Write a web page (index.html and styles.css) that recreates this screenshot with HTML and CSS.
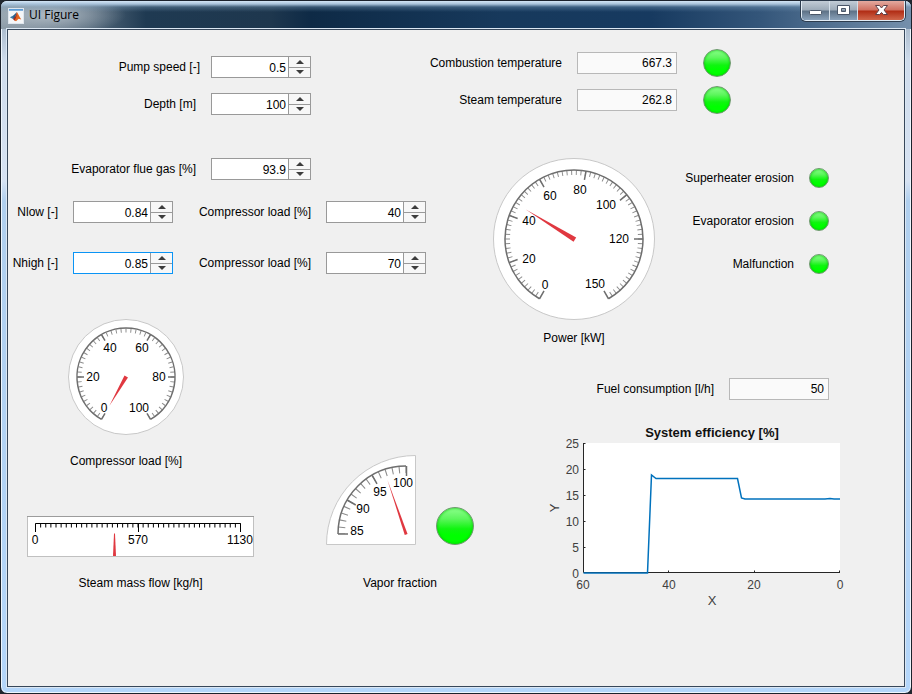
FILE: index.html
```html
<!DOCTYPE html>
<html lang="en">
<head>
<meta charset="utf-8">
<title>UI Figure</title>
<link rel="stylesheet" href="styles.css">
</head>
<body>
<div class="window">
  <header class="titlebar">
    <svg class="app-icon" width="16" height="16" viewBox="0 0 16 16" aria-hidden="true">
      <rect width="16" height="16" fill="#f4f6f8"/>
      <rect width="16" height="2" fill="#5b9bd5"/>
      <path d="M1 9.5 5 7.5 7 9 4.500 11.500Z" fill="#3a78a8"/>
      <path d="M5 7.500 9 3.500 7 10 4.500 11.500Z" fill="#2d5f86"/>
      <path d="M9 3.500 C8 8 6.500 10 4.500 11.500 L6.500 13.500 L9.500 10.500Z" fill="#a3291c"/>
      <path d="M9 3.500 C10.500 5 12 9.500 14 12 L11 11 L8 14 L6.500 13 C8 11 9 8 9 3.500Z" fill="#e3631e"/>
    </svg>
    <h1 class="title">UI Figure</h1>
    <div class="caption-buttons">
      <button class="cap cap-min" type="button" aria-label="Minimize"><svg width="13" height="13" viewBox="0 0 13 13"><rect x="0.500" y="6.500" width="12" height="4" rx="1" fill="#fff" stroke="#4a5668"/></svg></button>
      <button class="cap cap-max" type="button" aria-label="Maximize"><svg width="13" height="13" viewBox="0 0 13 13"><path fill-rule="evenodd" d="M0.500 1.500h12v9H0.500zM4.500 4.500v3h4v-3z" fill="#fff" stroke="#4a5668"/></svg></button>
      <button class="cap cap-close" type="button" aria-label="Close"><svg width="13" height="13" viewBox="0 0 13 13"><path d="M0.500 1.500H4.500L6.500 4 8.500 1.500h4L9 6l3.500 4.500h-4L6.500 8.500 4.500 10.500h-4L4 6z" fill="#fff" stroke="#5c4048"/></svg></button>
    </div>
  </header>

  <main class="client">
    <section class="top">
      <div class="inputs">
        <div class="field field-tight">
          <label for="pump">Pump speed [-]</label>
          <div class="spinner"><input id="pump" type="text" inputmode="decimal" value="0.5"><button class="up" type="button" aria-label="Increase"></button><button class="down" type="button" aria-label="Decrease"></button></div>
        </div>
        <div class="field">
          <label for="depth">Depth [m]</label>
          <div class="spinner"><input id="depth" type="text" inputmode="decimal" value="100"><button class="up" type="button" aria-label="Increase"></button><button class="down" type="button" aria-label="Decrease"></button></div>
        </div>
      </div>
      <div class="readouts">
        <div class="readout">
          <label for="combustion">Combustion temperature</label>
          <input class="value" id="combustion" type="text" value="667.3" readonly>
          <span class="lamp lamp-medium"></span>
        </div>
        <div class="readout">
          <label for="steam">Steam temperature</label>
          <input class="value" id="steam" type="text" value="262.8" readonly>
          <span class="lamp lamp-medium"></span>
        </div>
      </div>
    </section>

    <section class="lower">
      <div class="left">
        <div class="field">
          <label for="flue">Evaporator flue gas [%]</label>
          <div class="spinner"><input id="flue" type="text" inputmode="decimal" value="93.9"><button class="up" type="button" aria-label="Increase"></button><button class="down" type="button" aria-label="Decrease"></button></div>
        </div>
        <div class="limits">
          <label for="nlow">Nlow [-]</label>
          <div class="spinner"><input id="nlow" type="text" inputmode="decimal" value="0.84"><button class="up" type="button" aria-label="Increase"></button><button class="down" type="button" aria-label="Decrease"></button></div>
          <label for="loadlow">Compressor load [%]</label>
          <div class="spinner"><input id="loadlow" type="text" inputmode="decimal" value="40"><button class="up" type="button" aria-label="Increase"></button><button class="down" type="button" aria-label="Decrease"></button></div>
          <label for="nhigh">Nhigh [-]</label>
          <div class="spinner active"><input id="nhigh" type="text" inputmode="decimal" value="0.85"><button class="up" type="button" aria-label="Increase"></button><button class="down" type="button" aria-label="Decrease"></button></div>
          <label for="loadhigh">Compressor load [%]</label>
          <div class="spinner"><input id="loadhigh" type="text" inputmode="decimal" value="70"><button class="up" type="button" aria-label="Increase"></button><button class="down" type="button" aria-label="Decrease"></button></div>
        </div>

        <div class="meters">
          <div class="meter-column">
            <figure class="gauge compressor">
              <svg width="116" height="116" viewBox="0 0 116 116">
                <circle class="face" cx="58" cy="58" r="57.500"/>
                <path class="minor" d="M34.750 98.270A46.500 46.500 0 1 1 81.250 98.270" stroke-width="4" pathLength="50" stroke-dasharray="0.200 0.800" stroke-dashoffset="0.100"/>
                <path class="arc" d="M33.500 100.430A49 49 0 1 1 82.500 100.430"/>
                <g class="major">
                  <path d="M58 9v7" transform="rotate(-150 58 58)"/>
                  <path d="M58 9v7" transform="rotate(-90 58 58)"/>
                  <path d="M58 9v7" transform="rotate(-30 58 58)"/>
                  <path d="M58 9v7" transform="rotate(30 58 58)"/>
                  <path d="M58 9v7" transform="rotate(90 58 58)"/>
                  <path d="M58 9v7" transform="rotate(150 58 58)"/>
                </g>
                <g class="scale">
                  <text x="36" y="93">0</text><text x="25" y="62">20</text><text x="42" y="33">40</text>
                  <text x="74" y="33">60</text><text x="91" y="62">80</text><text x="71" y="93">100</text>
                </g>
                <path class="needle" d="M56 58.500h4L58 24.500z" transform="rotate(-150 58 58)"/>
              </svg>
              <figcaption>Compressor load [%]</figcaption>
            </figure>
            <figure class="gauge steam">
              <svg width="227" height="41" viewBox="0 0 227 41">
                <rect x="0.500" y="0.500" width="226" height="40" fill="#fff" stroke="#c0c0c0"/>
                <path d="M0 0.500h227" stroke="#9c9c9c"/>
                <path d="M8.500 9.500H214" stroke="#000" stroke-width="4" stroke-dasharray="1 4.125" stroke-dashoffset="0.500"/>
                <path d="M8.500 16V7.500H213.500V16M111.500 7.500V16" fill="none" stroke="#000"/>
                <g class="scale"><text x="8" y="28">0</text><text x="111" y="28">570</text><text x="213" y="28">1130</text></g>
                <path class="needle" d="M86 40h3L88 17.500h-1z"/>
              </svg>
              <figcaption>Steam mass flow [kg/h]</figcaption>
            </figure>
          </div>
          <figure class="gauge vapor">
            <div class="vapor-row">
              <svg width="90" height="90" viewBox="0 0 90 90">
                <path class="face" d="M0.500 89.500A89 89 0 0 1 89.500 0.500V89.500Z"/>
                <path class="minor" d="M15.500 79A64.500 64.500 0 0 1 80 14.500" stroke-width="7" pathLength="15" stroke-dasharray="0.160 0.840" stroke-dashoffset="0.080"/>
                <path class="arc" d="M12 79A68 68 0 0 1 80 11"/>
                <g class="major">
                  <path d="M80 11v10" transform="rotate(-90 80 79)"/>
                  <path d="M80 11v10" transform="rotate(-60 80 79)"/>
                  <path d="M80 11v10" transform="rotate(-30 80 79)"/>
                  <path d="M80.500 11v10"/>
                </g>
                <g class="scale"><text x="31" y="80">85</text><text x="37" y="58">90</text><text x="54" y="41">95</text><text x="77" y="32">100</text></g>
                <path class="needle" d="M78.500 79.500h3L80 22z" transform="rotate(-19 80 79)"/>
              </svg>
              <span class="lamp lamp-large"></span>
            </div>
            <figcaption>Vapor fraction</figcaption>
          </figure>
        </div>
      </div>

      <div class="right">
        <div class="power-row">
          <figure class="gauge power">
            <svg width="162" height="162" viewBox="0 0 162 162">
              <circle class="face" cx="81" cy="81" r="80.500"/>
              <path class="minor" d="M47.750 138.590A66.500 66.500 0 1 1 114.250 138.590" stroke-width="5" pathLength="75" stroke-dasharray="0.210 0.790" stroke-dashoffset="0.105"/>
              <path class="arc" d="M46.500 140.760A69 69 0 1 1 115.500 140.760"/>
              <g class="major">
                <path d="M81 12v9" transform="rotate(-150 81 81)"/>
                <path d="M81 12v9" transform="rotate(-110 81 81)"/>
                <path d="M81 12v9" transform="rotate(-70 81 81)"/>
                <path d="M81 12v9" transform="rotate(-30 81 81)"/>
                <path d="M81 12v9" transform="rotate(10 81 81)"/>
                <path d="M81 12v9" transform="rotate(50 81 81)"/>
                <path d="M81 12v9" transform="rotate(90 81 81)"/>
                <path d="M81 12v9" transform="rotate(150 81 81)"/>
              </g>
              <g class="scale">
                <text x="52" y="131">0</text><text x="36" y="105">20</text><text x="36" y="67">40</text><text x="57" y="42">60</text>
                <text x="87" y="36">80</text><text x="113" y="51">100</text><text x="126" y="85">120</text><text x="102" y="130">150</text>
              </g>
              <path class="needle" d="M78.500 82h5L81 24.500z" transform="rotate(-58.500 81 81)"/>
            </svg>
            <figcaption>Power [kW]</figcaption>
          </figure>
          <ul class="status">
            <li>Superheater erosion<span class="lamp"></span></li>
            <li>Evaporator erosion<span class="lamp"></span></li>
            <li>Malfunction<span class="lamp"></span></li>
          </ul>
        </div>
        <div class="fuel">
          <label for="fuel">Fuel consumption [l/h]</label>
          <input class="value" id="fuel" type="text" value="50" readonly>
        </div>
        <svg class="chart" width="310" height="186" viewBox="0 0 310 186" role="img" aria-label="System efficiency [%]">
          <rect x="39" y="19" width="256" height="130" fill="#fff"/>
          <path d="M38.500 19V148.500H295M38.500 19.500h2M38.500 45.500h2M38.500 71.500h2M38.500 97.500h2M38.500 123.500h2M123.500 148.500v-2M209.500 148.500v-2M294.500 148.500v-2" fill="none" stroke="#262626"/>
          <path d="M38.500 149H102.500L106.500 51L111 54.500H192.500L196.500 74L200 75H280L285 74.500L289 75H295" fill="none" stroke="#0072bd" stroke-width="1.500"/>
          <text class="chart-title" x="167" y="13">System efficiency [%]</text>
          <g class="y-ticks"><text x="34" y="24">25</text><text x="34" y="50">20</text><text x="34" y="76">15</text><text x="34" y="102">10</text><text x="34" y="128">5</text><text x="34" y="154">0</text></g>
          <g class="x-ticks"><text x="38" y="165">60</text><text x="124" y="165">40</text><text x="209" y="165">20</text><text x="295" y="165">0</text></g>
          <text class="axis-name" x="167" y="181">X</text>
          <text class="axis-name" transform="translate(14 84) rotate(-90)">Y</text>
        </svg>
      </div>
    </section>
  </main>
</div>
</body>
</html>
```
FILE: styles.css
```css
* { box-sizing: border-box; }

body {
  margin: 0;
  background: #20262e;
  font: 12px/16px "Liberation Sans", Arial, sans-serif;
  color: #000;
}

.window {
  display: flex;
  flex-direction: column;
  min-height: 100vh;
  padding: 0 6px 6px;
  border: 1px solid #1c222c;
  border-radius: 7px;
  background: linear-gradient(#8fa2b4 0, #cfdcec 60px, #d6e2f2 180px, #b0cfee 200px, #b4d6fa 100%);
  box-shadow: inset 0 0 0 1px #eef6fd;
}

.titlebar {
  display: flex;
  align-items: flex-start;
  height: 28px;
  margin: 0 -6px;
  padding: 6px 6px 0 7px;
  border-radius: 6px 6px 0 0;
  background:
    linear-gradient(#d4e6f6 0, #a8c2da 3px, rgba(130, 165, 195, 0.350) 6px, transparent 11px),
    radial-gradient(ellipse 75px 20px at 50px 14px, rgba(190, 200, 208, 0.800), transparent),
    linear-gradient(90deg, #8b9aa6 0, #566a7c 90px, #1f3a52 145px, #1e374e 270px, #0e2a46 310px, #17395c 500px, #173a60 650px, #34567a 760px, #7590ac 100%);
}

.app-icon { margin-top: 1px; border: 1px solid #dfe6ee; }

.title {
  flex: 1;
  margin: 0 0 0 5px;
  font: 12px/16px "Open Sans", "Noto Sans", sans-serif;
}

.caption-buttons {
  display: flex;
  height: 20px;
  margin: -6px 0 0;
  border: 1px solid #e2ecf5;
  border-top: 0;
  border-radius: 0 0 5px 5px;
  overflow: hidden;
  box-shadow: 0 0 0 1px #2d3c4e;
}

.cap {
  display: flex;
  align-items: center;
  justify-content: center;
  width: 28px;
  padding: 0;
  border: 0;
  border-right: 1px solid #d4dfe9;
  background: linear-gradient(#c2ccd6 0, #9caab8 9px, #5d7186 10px, #8aa2ba 100%);
}

.cap-close {
  width: 46px;
  border-right: 0;
  background: linear-gradient(#e3aaa0 0, #cf7060 9px, #b02c14 10px, #d0674c 100%);
}

.client {
  flex: 1;
  border: 1px solid #37475a;
  background: #f0f0f0;
  box-shadow: 0 0 0 1px #dbe7f3;
}

.top {
  display: grid;
  grid-template-columns: 412fr 484fr;
}

.inputs {
  display: flex;
  flex-direction: column;
  gap: 15px;
  padding-top: 26px;
}

.field {
  display: grid;
  grid-template-columns: 188px 100px;
  column-gap: 15px;
  align-items: center;
}

.field-tight { grid-template-columns: 192px 100px; column-gap: 11px; }

label { text-align: right; white-space: nowrap; }

.spinner {
  display: grid;
  grid-template: 1fr 1fr / 1fr 21px;
  gap: 1px;
  height: 22px;
  border: 1px solid #999;
  background: #999;
}

.spinner.active { border-color: #0a94f5; }

.spinner input {
  grid-row: 1 / 3;
  width: 100%;
  min-width: 0;
  min-height: 0;
  padding: 1px 2px 0;
  border: 0;
  outline: 0;
  background: #fff;
  font: inherit;
  text-align: right;
}

.spinner button {
  display: grid;
  place-items: center;
  padding: 0;
  border: 0;
  background: #f7f7f7;
}

.spinner button::before {
  content: "";
  border: 0 solid transparent;
  border-width: 0 4px;
}

.spinner .up::before { border-bottom: 4px solid #3c3c3c; }
.spinner .down::before { border-top: 4px solid #3c3c3c; }

.readouts {
  display: flex;
  flex-direction: column;
  gap: 9px;
  padding-top: 19px;
}

.readout {
  display: grid;
  grid-template-columns: 142px 100px auto;
  justify-content: start;
  column-gap: 15px;
  align-items: center;
  height: 28px;
}

.readout .lamp { margin-left: 11px; }

.value {
  width: 100px;
  height: 22px;
  padding: 0 4px;
  border: 1px solid #b8b8b8;
  background: #fafafa;
  font: inherit;
  text-align: right;
}

.lamp {
  display: block;
  flex: none;
  width: 20px;
  height: 20px;
  border: 1px solid #6b9a6b;
  border-radius: 50%;
  background: linear-gradient(#8cff8c 0, #5cf65c 30%, #10f510 58%, #00ff00 75%);
  box-shadow: inset 0 0 3px #00c800;
}

.lamp-medium { width: 28px; height: 28px; }
.lamp-large { width: 38px; height: 38px; }

.lower {
  display: grid;
  grid-template-columns: 472fr 424fr;
}

.left { padding-top: 43px; }

.limits {
  display: grid;
  grid-template-columns: 50px 100px 123px 100px;
  gap: 29px 15px;
  align-items: center;
  margin-top: 21px;
}

.meters {
  display: grid;
  grid-template-columns: 318px auto;
  justify-content: start;
  align-items: end;
  margin-top: 45px;
}

.gauge {
  display: flex;
  flex-direction: column;
  align-items: center;
  gap: 18px;
  margin: 0;
}

.meter-column {
  display: flex;
  flex-direction: column;
  align-items: flex-start;
  gap: 47px;
}

.compressor { margin-left: 60px; }
.steam { margin-left: 19px; }
.vapor { gap: 30px; }

.vapor-row {
  display: flex;
  align-items: flex-end;
  gap: 20px;
}

.face { fill: #fff; stroke: #c8c8c8; }
.arc { fill: none; stroke: #6e6e6e; stroke-width: 1.500; }
.minor { fill: none; stroke: #8c8c8c; }
.major { stroke: #6e6e6e; stroke-width: 1.500; }
.needle { fill: #e03840; }
.scale { text-anchor: middle; }

.right { padding-top: 43px; }

.power-row { display: flex; }
.power { gap: 10px; margin-left: 13px; }

.status {
  width: 174px;
  display: flex;
  flex-direction: column;
  gap: 23px;
  margin: 0;
  padding: 10px 0 0;
  list-style: none;
}

.status li {
  display: flex;
  align-items: center;
  justify-content: flex-end;
  gap: 15px;
}

.fuel {
  display: flex;
  align-items: center;
  justify-content: flex-end;
  gap: 15px;
  width: 349px;
  margin-top: 32px;
}

.chart {
  display: block;
  margin: 24px 0 0 65px;
  fill: #404040;
}

.chart-title { font-weight: 700; font-size: 13px; text-anchor: middle; fill: #111; }
.y-ticks { text-anchor: end; }
.x-ticks { text-anchor: middle; }
.axis-name { font-size: 13px; text-anchor: middle; }
```
